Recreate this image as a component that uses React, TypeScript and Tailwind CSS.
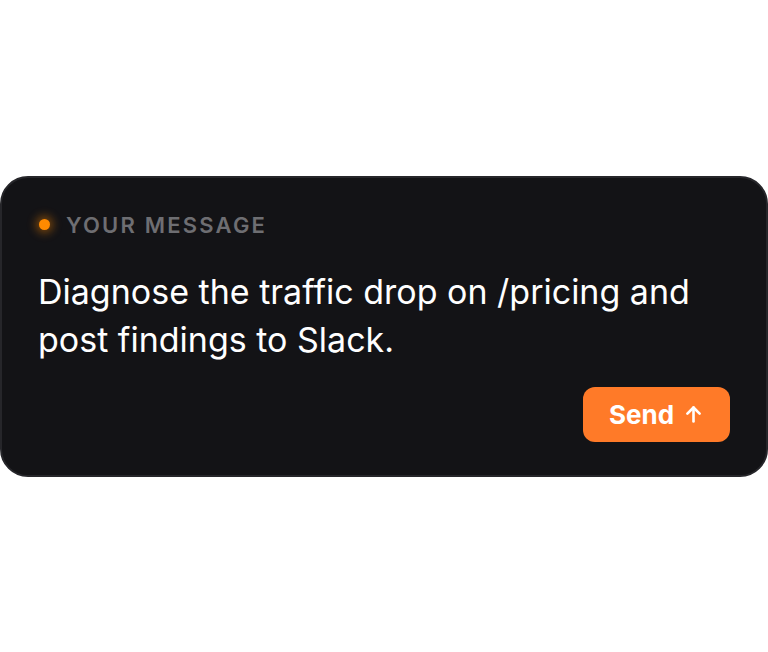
export default function App() {
  return (
    <div
      className="flex h-screen w-full items-center justify-center bg-white"
      style={{ fontFamily: 'Inter, "Noto Sans", sans-serif' }}
    >
      <div className="w-full rounded-[28px] border-2 border-[#26262a] bg-[#131316] px-[36px] pb-[33px] pt-[35px]">
        {/* Label */}
        <div className="flex h-[24px] items-center gap-[16px]">
          <span className="ml-[1px] h-[11px] w-[11px] rounded-full bg-[#ff8a00] shadow-[0_0_10px_3px_rgba(255,138,0,0.45)]" />
          <span className="text-[22px] font-semibold uppercase leading-[24px] tracking-[0.1em] text-[#6e6e72]">
            Your message
          </span>
        </div>

        {/* Message */}
        <p className="mt-[31px] text-[34px] leading-[48px] text-white">
          Diagnose the traffic drop on /pricing and
          <br />
          post findings to Slack.
        </p>

        {/* Actions */}
        <div className="mt-[23px] flex justify-end">
          <button className="flex h-[55px] w-[147px] items-center justify-center gap-[9px] rounded-[12px] bg-[#ff7a28] text-[26px] font-bold text-white">
            <span>Send</span>
            <svg width="21" height="21" viewBox="0 0 24 24" fill="none" stroke="currentColor" strokeWidth="3" strokeLinecap="round" strokeLinejoin="round">
              <path d="M12 20V4" />
              <path d="M5 11l7-7 7 7" />
            </svg>
          </button>
        </div>
      </div>
    </div>
  );
}
